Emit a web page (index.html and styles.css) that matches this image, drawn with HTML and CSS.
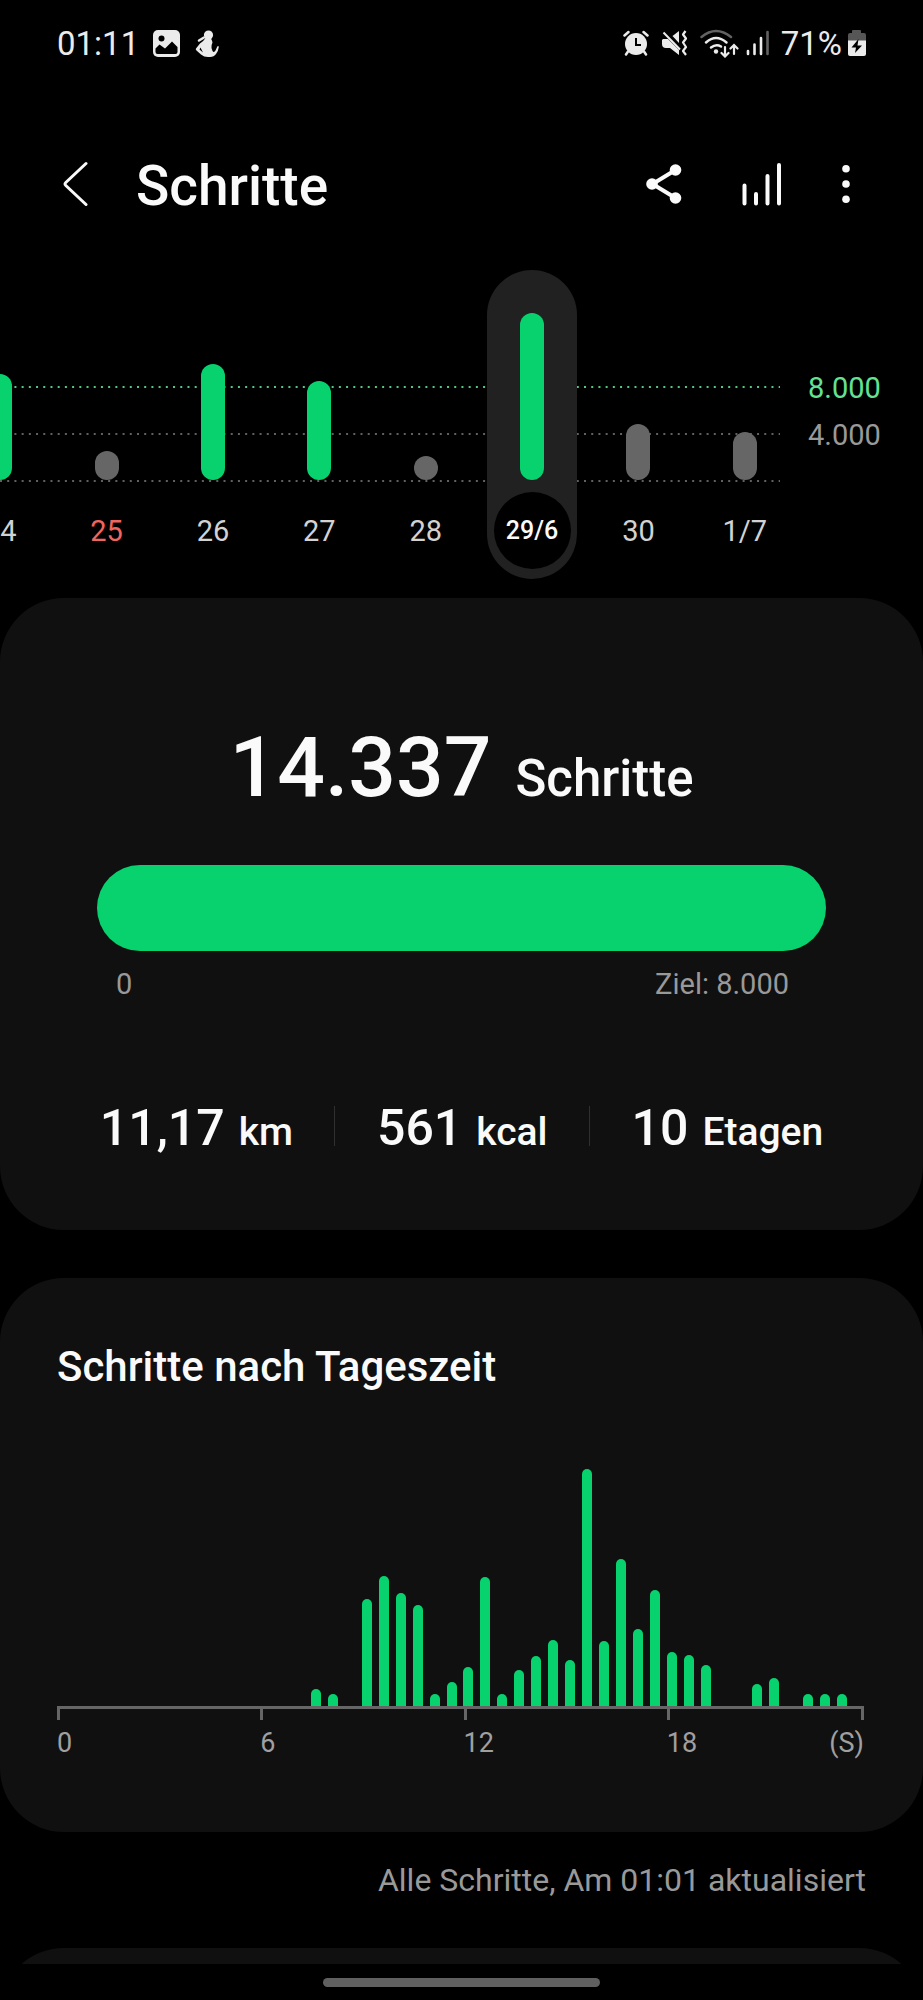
FILE: index.html
```html
<!DOCTYPE html>
<html lang="de">
<head>
<meta charset="utf-8">
<meta name="viewport" content="width=device-width, initial-scale=1">
<title>Schritte</title>
<link rel="stylesheet" href="styles.css">
</head>
<body>
<div class="screen">
  <div class="status">
    <div class="status-group status-left">
      <span class="clock">01:11</span>
      <svg class="icon-picture" width="27" height="27" viewBox="0 0 27 27" aria-hidden="true">
        <rect x="0" y="0" width="27" height="27" rx="5" fill="#ebebeb"/>
        <circle cx="8.500" cy="8.500" r="3" fill="#000"/>
        <path d="M2.500 22V18.500L6.500 14.500L12 18.500L19 11.500L24.500 17V22Q24.500 24 22.500 24H4.500Q2.500 24 2.500 22Z" fill="#000"/>
      </svg>
      <svg class="icon-figure" width="24" height="27" viewBox="0 0 24 27" aria-hidden="true">
        <circle cx="13.500" cy="5" r="4.600" fill="#ebebeb"/>
        <path d="M10.500 8Q8 12 5 13.500L1 18.500Q.3 19.500 1.500 20.500L6 24.500Q9 27 13 27H15Q19 27 21 24Q23.500 20.500 23.800 17Q23.500 15.500 22.300 16.500L20.500 20.500Q19 23 17.500 21L16.500 18Q16 15.500 17.500 12.500Q17 9.500 15.500 8ZM5.500 17.500L8 22.500L4.500 19.500Z" fill="#ebebeb"/>
        <path d="M4 10.500L9 7.500" stroke="#ebebeb" stroke-width="2.500" stroke-linecap="round"/>
      </svg>
    </div>
    <div class="status-group status-right">
      <svg width="26" height="26" viewBox="0 0 26 26" fill="none" stroke="#ebebeb" aria-hidden="true">
        <circle cx="13" cy="14" r="11" fill="#ebebeb" stroke="none"/>
        <path d="M1.500 5.500L5.500 2M24.500 5.500L20.500 2" stroke-width="2.500" stroke-linecap="round"/>
        <path d="M5 21.500L3 24.500M21 21.500L23 24.500" stroke-width="2.500" stroke-linecap="round"/>
        <path d="M13 8V15H18" stroke="#000" stroke-width="2"/>
      </svg>
      <svg class="icon-mute" width="27" height="26" viewBox="0 0 27 26" fill="none" stroke="#ebebeb" aria-hidden="true">
        <path d="M2 9H7L18 20V25L9 18H5Q1 18 1 14V10Z" fill="#ebebeb" stroke="none"/>
        <path d="M11.500 6L18 1V13Z" fill="#ebebeb" stroke="none"/>
        <path d="M2.500 2.500L19 19.500" stroke-width="2"/>
        <path d="M24.500 1L22 4.500L25 8.500L22 12.500L25 17L22 21L25 25" stroke-width="2.200" stroke-linejoin="round"/>
      </svg>
      <svg class="icon-wifi" width="39" height="29" viewBox="0 0 39 29" fill="none" stroke="#ebebeb" stroke-width="2.500" stroke-linecap="round" aria-hidden="true">
        <path d="M1.500 8Q16 -4 31 8" stroke="#626262"/>
        <path d="M6 13.500Q16 4.500 26.500 13.500"/>
        <path d="M11 18.500Q16 14.500 21 17.500"/>
        <circle cx="16" cy="22.500" r="2.200" fill="#ebebeb" stroke="none"/>
        <path d="M25 18V27M21.500 24L25 27.500L28.500 24M34 25V17M30.500 19.500L34 16L37.500 19.500" stroke-width="2.200"/>
      </svg>
      <svg class="icon-signal" width="23" height="26" viewBox="0 0 23 26" fill="none" stroke="#ebebeb" stroke-width="2.600" stroke-linecap="round" aria-hidden="true">
        <path d="M2 21V24M8.500 14.500V24M15 8V24"/>
        <path d="M21.500 2V24" stroke="#626262"/>
      </svg>
      <span class="charge">71%</span>
      <svg class="icon-battery" width="20" height="28" viewBox="0 0 20 28" aria-hidden="true">
        <path d="M5 4V2Q5 1 6 1H13Q14 1 14 2V4H17Q19 4 19 6V12H1V6Q1 4 3 4Z" fill="#565656"/>
        <path d="M1 11.500H19V25Q19 27 17 27H3Q1 27 1 25Z" fill="#ebebeb"/>
        <path d="M11.500 10L4.500 18.500H9L8 24L15 16.500H10.500Z" fill="#000"/>
      </svg>
    </div>
  </div>

  <header class="topbar">
    <button class="icon-button back" type="button" aria-label="Zurück">
      <svg width="25" height="46" viewBox="0 0 25 46" fill="none" stroke="#fafafa" stroke-width="3" stroke-linecap="round" stroke-linejoin="round"><path d="M23 2.500L2.800 21.500Q1.200 23 2.800 24.500L23 43.500"/></svg>
    </button>
    <h1 class="title">Schritte</h1>
    <div class="actions">
      <button class="icon-button" type="button" aria-label="Teilen">
        <svg width="36" height="42" viewBox="0 0 36 42" fill="#fafafa" stroke="#fafafa" stroke-width="4"><path d="M29.500 7L6.500 21L29.500 35" fill="none"/><g stroke="none"><circle cx="29.500" cy="7" r="5.800"/><circle cx="6" cy="21" r="5.800"/><circle cx="29.500" cy="35" r="5.800"/></g></svg>
      </button>
      <button class="icon-button" type="button" aria-label="Diagramm">
        <svg width="40" height="46" viewBox="0 0 40 46" fill="none" stroke="#fafafa" stroke-width="4" stroke-linecap="round"><path d="M2.500 24.500V42.500M14 33V42.500M25.500 15V42.500M37 4V42.500"/></svg>
      </button>
      <button class="icon-button" type="button" aria-label="Weitere Optionen">
        <svg width="8" height="40" viewBox="0 0 8 40" fill="#fafafa"><circle cx="4" cy="4.800" r="3.800"/><circle cx="4" cy="20" r="3.800"/><circle cx="4" cy="35.200" r="3.800"/></svg>
      </button>
    </div>
  </header>

  <main>
    <section class="week" aria-label="Schritte pro Tag">
      <svg class="guides" width="100%" height="212" aria-hidden="true">
        <g stroke-width="2" stroke-dasharray="2 5.210">
          <line x1="0" x2="100%" y1="117" y2="117" stroke="#53c983"/>
          <line x1="0" x2="100%" y1="164" y2="164" stroke="#616161"/>
          <line x1="0" x2="100%" y1="211" y2="211" stroke="#616161"/>
        </g>
      </svg>
      <ul class="days">
        <li><button class="day" type="button"><span class="track"><span class="bar reached" style="height:106px"></span></span><span class="date">24</span></button></li>
        <li><button class="day" type="button"><span class="track"><span class="bar" style="height:29px"></span></span><span class="date sunday">25</span></button></li>
        <li><button class="day" type="button"><span class="track"><span class="bar reached" style="height:116px"></span></span><span class="date">26</span></button></li>
        <li><button class="day" type="button"><span class="track"><span class="bar reached" style="height:99px"></span></span><span class="date">27</span></button></li>
        <li><button class="day" type="button"><span class="track"><span class="bar" style="height:24px"></span></span><span class="date">28</span></button></li>
        <li><button class="day selected" type="button" aria-current="date"><span class="track"><span class="bar reached" style="height:167px"></span></span><span class="date">29/6</span></button></li>
        <li><button class="day" type="button"><span class="track"><span class="bar" style="height:56px"></span></span><span class="date">30</span></button></li>
        <li><button class="day" type="button"><span class="track"><span class="bar" style="height:48px"></span></span><span class="date">1/7</span></button></li>
      </ul>
      <div class="scale"><span class="goal">8.000</span><span>4.000</span></div>
    </section>

    <section class="card summary">
      <p class="total"><span class="total-number">14.337</span><span class="total-unit">Schritte</span></p>
      <div class="progress" role="progressbar" aria-label="Tagesziel" aria-valuemin="0" aria-valuemax="8000" aria-valuenow="8000"></div>
      <div class="range"><span>0</span><span>Ziel: 8.000</span></div>
      <ul class="stats">
        <li><span class="stat-number">11,17</span> <span class="stat-unit">km</span></li>
        <li><span class="stat-number">561</span> <span class="stat-unit">kcal</span></li>
        <li><span class="stat-number">10</span> <span class="stat-unit">Etagen</span></li>
      </ul>
    </section>

    <section class="card hourly">
      <h2 class="card-title">Schritte nach Tageszeit</h2>
      <div class="bars">
        <i></i><i></i><i></i><i></i><i></i><i></i><i></i><i></i><i></i><i></i><i></i><i></i><i></i><i></i><i></i>
        <i style="height:17px"></i><i style="height:12px"></i><i></i><i style="height:107px"></i><i style="height:130px"></i><i style="height:113px"></i><i style="height:101px"></i><i style="height:12px"></i><i style="height:24px"></i><i style="height:39px"></i><i style="height:129px"></i><i style="height:12px"></i><i style="height:36px"></i><i style="height:50px"></i><i style="height:66px"></i><i style="height:46px"></i><i style="height:237px"></i><i style="height:65px"></i><i style="height:147px"></i><i style="height:77px"></i><i style="height:116px"></i><i style="height:54px"></i><i style="height:51px"></i><i style="height:41px"></i><i></i><i></i><i style="height:22px"></i><i style="height:28px"></i><i></i><i style="height:12px"></i><i style="height:12px"></i><i style="height:12px"></i><i></i>
      </div>
      <div class="ticks"><span></span><span></span><span></span><span></span></div>
      <div class="hours"><span>0</span><span>6</span><span>12</span><span class="last"><span>18</span><span>(S)</span></span></div>
    </section>

    <p class="updated">Alle Schritte, Am 01:01 aktualisiert</p>
    <div class="next"><section class="card next-card"></section></div>
  </main>
  <div class="nav"><span class="handle"></span></div>
</div>
</body>
</html>
```
FILE: styles.css
```css
* {
  box-sizing: border-box;
}

body {
  margin: 0;
  background: #000;
  color: #fafafa;
  font-family: Roboto, "Liberation Sans", sans-serif;
}

h1, h2, p, ul {
  margin: 0;
  padding: 0;
}

ul {
  list-style: none;
}

button {
  padding: 0;
  border: 0;
  background: none;
  color: inherit;
  font: inherit;
}

svg {
  display: block;
}

.screen {
  display: flex;
  flex-direction: column;
  overflow: hidden;
}

/* Status bar */
.status {
  display: flex;
  justify-content: space-between;
  align-items: center;
  height: 86px;
  padding: 0 56px 0 57px;
  color: #ebebeb;
  font-size: 33px;
}

.status-group {
  display: flex;
  align-items: center;
}

.icon-picture {
  margin-left: 14px;
}

.icon-figure {
  margin-left: 15px;
}

.icon-mute {
  margin-left: 12px;
}

.icon-wifi {
  margin-left: 12px;
}

.icon-signal {
  margin-left: 7px;
}

.charge {
  margin-left: 12px;
}

.icon-battery {
  margin-left: 5px;
}

/* Title bar */
.topbar {
  display: flex;
  align-items: center;
  height: 182px;
  padding: 14px 73px 0 63px;
}

.title {
  padding-top: 4px;
  margin-left: 48px;
  font-size: 55px;
  font-weight: 500;
  line-height: 64px;
}

.actions {
  display: flex;
  align-items: center;
  gap: 60px;
  margin-left: auto;
}

/* Week chart */
.week {
  position: relative;
  display: flex;
  align-items: flex-start;
  height: 330px;
  padding-top: 2px;
}

.guides {
  position: absolute;
  top: 2px;
  left: 0;
  width: calc(100% - 143px);
}

.days {
  position: relative;
  display: flex;
  flex: 1;
  margin-left: -53px;
}

.days li {
  display: flex;
  flex: 1;
  justify-content: center;
}

.day {
  display: flex;
  flex-direction: column;
  align-items: center;
  width: 90px;
  height: 309px;
  border-radius: 45px;
  font-size: 29px;
  color: #d2d2d2;
}

.selected {
  background: #212121;
  color: #fafafa;
  font-size: 25px;
  font-weight: 500;
}

.track {
  display: flex;
  align-items: flex-end;
  height: 210px;
}

.bar {
  width: 24px;
  border-radius: 12px;
  background: #666;
}

.reached {
  background: #07d26d;
}

.date {
  display: flex;
  align-items: center;
  justify-content: center;
  width: 77px;
  height: 77px;
  margin-top: 12px;
  border-radius: 50%;
}

.selected .date {
  background: #000;
}

.sunday {
  color: #f0655f;
}

.scale {
  display: flex;
  flex-direction: column;
  width: 125px;
  padding: 95px 0 0 10px;
  color: #999;
  font-size: 29px;
  line-height: 47px;
}

.goal {
  color: #63e391;
}

/* Cards */
.card {
  border-radius: 64px;
  background: #101010;
}

.summary {
  padding: 120px 97px 70px;
}

.total {
  display: flex;
  justify-content: center;
  align-items: baseline;
  gap: 24px;
  font-weight: 500;
  line-height: 100px;
}

.total-number {
  font-size: 84px;
}

.total-unit {
  font-size: 51px;
  line-height: 60px;
}

.progress {
  height: 86px;
  margin-top: 47px;
  border-radius: 43px;
  background: #07d26d;
}

.range {
  display: flex;
  justify-content: space-between;
  margin-top: 16px;
  padding: 0 37px 0 19px;
  color: #999;
  font-size: 29px;
  line-height: 34px;
}

.stats {
  display: flex;
  justify-content: center;
  margin: 95px -40px 0;
  font-weight: 500;
  line-height: 64px;
  white-space: nowrap;
}

.stats li {
  display: flex;
  align-items: baseline;
  gap: 14px;
  padding: 0 42px;
  background: linear-gradient(#303030, #303030) right 10px / 1px 40px no-repeat;
}

.stats li:last-child {
  background: none;
}

.stat-number {
  font-size: 50px;
}

.stat-unit {
  font-size: 39px;
  line-height: 48px;
}

/* Steps by time of day */
.hourly {
  margin-top: 48px;
  padding: 62px 59px 72px 57px;
}

.card-title {
  font-size: 42px;
  font-weight: 500;
  line-height: 54px;
}

.bars {
  display: grid;
  grid-template-columns: repeat(48, 1fr);
  align-items: end;
  justify-items: center;
  height: 252px;
  margin: 60px -3px 0 -4px;
}

.bars i {
  width: 10px;
  border-radius: 5px 5px 0 0;
  background: #07d26d;
}

.ticks, .hours {
  display: grid;
  grid-template-columns: 203fr 203fr 203fr 197fr;
}

.ticks {
  height: 14px;
  border-top: 3px solid #666;
}

.ticks span {
  border-left: 3px solid #666;
}

.ticks span:last-child {
  border-right: 3px solid #666;
}

.hours {
  padding-top: 6px;
  color: #a0a0a0;
  font-size: 27px;
  line-height: 34px;
}

.last {
  display: flex;
  justify-content: space-between;
}

.updated {
  margin-top: 28px;
  padding: 0 57px;
  color: #999;
  font-size: 32px;
  line-height: 40px;
  text-align: right;
}

.next {
  height: 16px;
  margin-top: 48px;
  overflow: hidden;
}

.next-card {
  height: 128px;
}

/* Gesture bar */
.nav {
  display: flex;
  justify-content: center;
  align-items: center;
  height: 36px;
}

.handle {
  width: 30%;
  height: 9px;
  border-radius: 5px;
  background: #606060;
}
```
